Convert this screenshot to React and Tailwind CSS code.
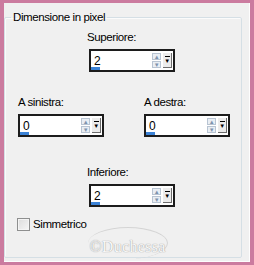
import React from 'react';

function SpinBox({ value }) {
  return (
    <div className="relative flex h-[23px] w-[86px] items-center border-2 border-[#1c1c1c] bg-white">
      <span className="flex-1 pl-[3px] text-[12px] leading-none text-black">{value}</span>
      <div className="flex flex-col gap-px">
        <span className="flex h-[7px] w-[9px] items-center justify-center border border-[#b8c4d2] bg-[#e9eef4] text-[6px] leading-none text-[#7f93ad]">▲</span>
        <span className="flex h-[7px] w-[9px] items-center justify-center border border-[#b8c4d2] bg-[#e9eef4] text-[6px] leading-none text-[#7f93ad]">▼</span>
      </div>
      <div className="ml-[2px] mr-[1px] flex h-[15px] w-[9px] flex-col items-center justify-center border-b border-r border-[#6d6d6d] bg-[#ececec]">
        <span className="h-px w-[5px] bg-black" />
        <span className="mt-px text-[6px] leading-none text-black">▼</span>
      </div>
      <span className="absolute bottom-0 left-0 h-[3px] w-[9px] bg-[#3b82d6]" />
    </div>
  );
}

export default function App() {
  return (
    <div
      className="h-[265px] w-[254px] border-b-[3px] border-l-[4px] border-r-[4px] border-t-[3px] border-[#cb7b9f] bg-[#f0f0f0] text-[11.5px] tracking-[-0.4px] text-black"
      style={{ fontFamily: '"Liberation Sans", Arial, sans-serif' }}
    >
      <div className="h-full w-full border-b border-r border-[#fdfdfd] pt-[7px]">
        <fieldset className="relative h-[248px] w-[238px] rounded-[2px] border border-[#d5dfe5] p-0 shadow-[inset_1px_1px_0_#fbfbfb]">
          <legend className="ml-[6px] px-[2px] leading-[14px]">Dimensione in pixel</legend>
          <div className="flex flex-col">
            <div className="flex flex-col pl-[84px] pt-[6px]">
              <span className="-ml-[2px] leading-[14px]">Superiore:</span>
              <div className="mt-[5px]">
                <SpinBox value="2" />
              </div>
            </div>
            <div className="mt-[23px] flex gap-[40px] pl-[13px]">
              <div className="flex flex-col">
                <span className="leading-[14px]">A sinistra:</span>
                <div className="mt-[5px]">
                  <SpinBox value="0" />
                </div>
              </div>
              <div className="flex flex-col">
                <span className="leading-[14px]">A destra:</span>
                <div className="mt-[5px]">
                  <SpinBox value="0" />
                </div>
              </div>
            </div>
            <div className="mt-[28px] flex flex-col pl-[84px]">
              <span className="-ml-[2px] leading-[14px]">Inferiore:</span>
              <div className="mt-[5px]">
                <SpinBox value="2" />
              </div>
            </div>
            <label className="mt-[10px] flex items-center gap-[3px] pl-[12px]">
              <span className="h-[13px] w-[13px] border border-[#8e8f8f] bg-gradient-to-br from-[#dcdcdc] to-[#f6f6f6] shadow-[inset_0_0_0_1px_#f4f4f4]" />
              <span className="leading-[14px]">Simmetrico</span>
            </label>
          </div>
          <div
            className="pointer-events-none absolute left-[83px] top-[203px] flex h-[32px] w-[80px] items-center justify-center rounded-[50%] border-r border-t border-[#d4d4d4] pt-[6px] text-[16px] tracking-[0.3px] text-[#f8f8f8]"
            style={{ fontFamily: '"Liberation Serif", serif', textShadow: '0 0 1px #a0a0a0, 0 0 1px #b0b0b0' }}
          >
            ©Duchessa
          </div>
        </fieldset>
      </div>
    </div>
  );
}
